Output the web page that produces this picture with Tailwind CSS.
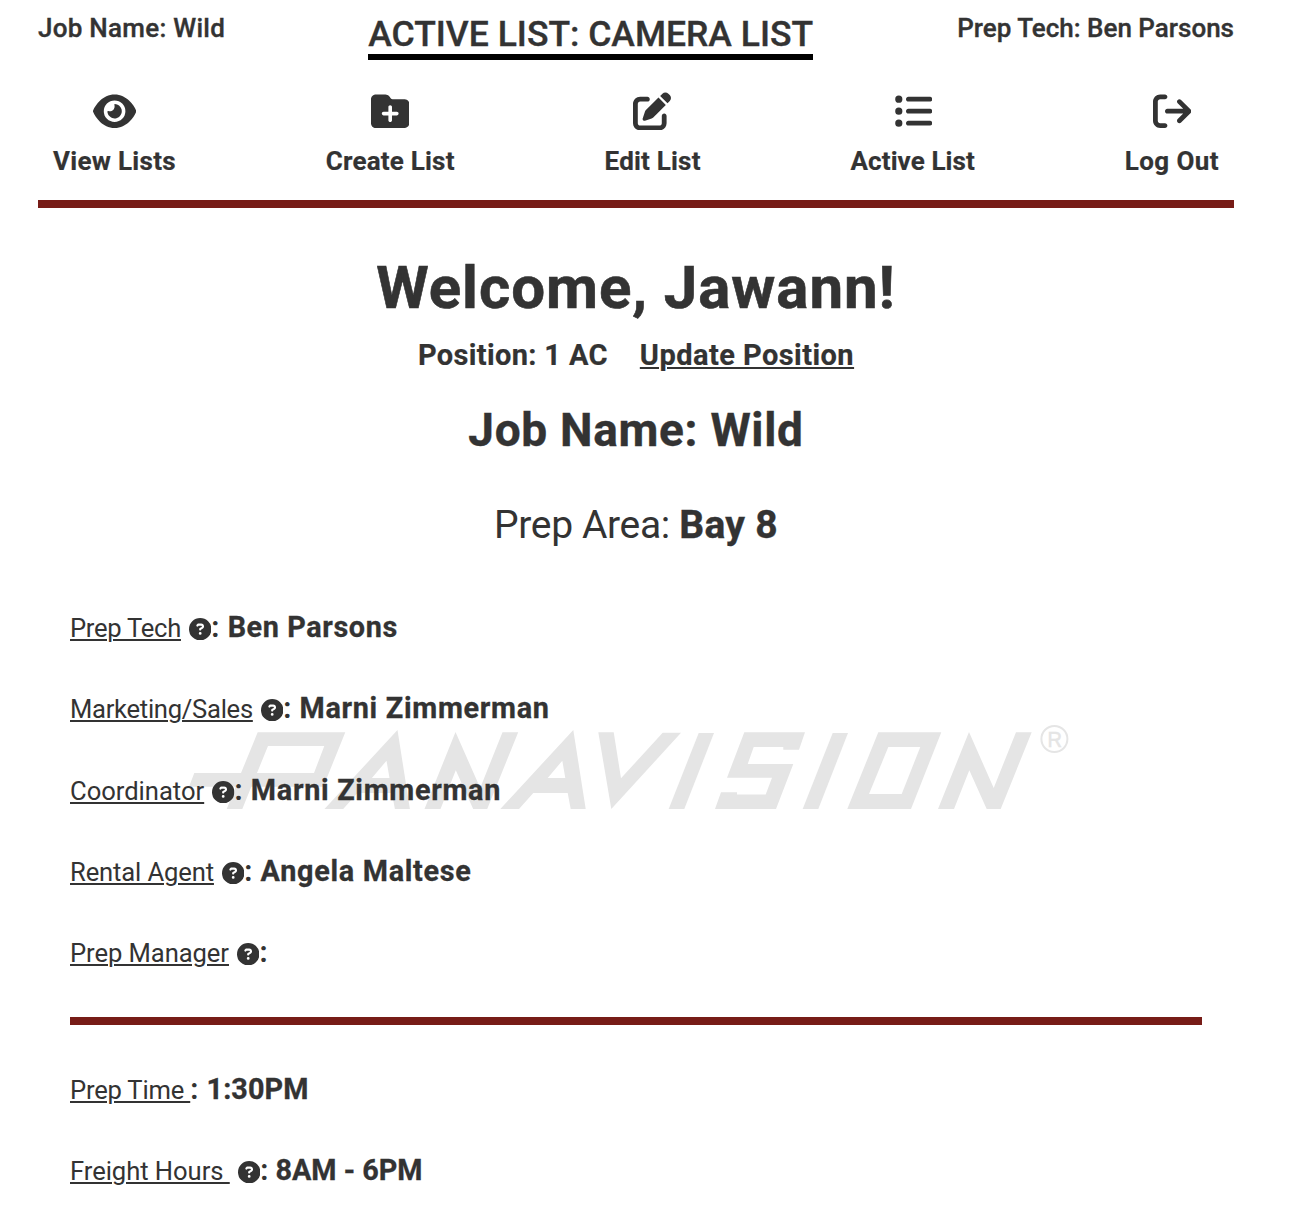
<!DOCTYPE html>
<html lang="en">
<head>
<meta charset="utf-8">
<title>Camera List</title>
<script src="https://cdn.jsdelivr.net/npm/@tailwindcss/browser@4"></script>
</head>
<body class="relative h-[1216px] overflow-hidden bg-white font-[Roboto,sans-serif] text-[#333]">
<!-- shared help icon -->
<svg class="hidden">
  <symbol id="help" viewBox="0 0 512 512"><path d="M256 512A256 256 0 1 0 256 0a256 256 0 1 0 0 512zM169.8 165.3c7.9-22.3 29.1-37.3 52.8-37.3h58.3c34.9 0 63.1 28.3 63.1 63.1c0 22.6-12.1 43.5-31.7 54.8L280 264.4c-.2 13-10.9 23.6-24 23.6c-13.3 0-24-10.7-24-24V250.5c0-8.6 4.6-16.5 12.1-20.8l44.3-25.4c4.7-2.7 7.6-7.7 7.6-13.1c0-8.4-6.8-15.1-15.1-15.1H222.6c-3.4 0-6.4 2.1-7.5 5.3l-.4 1.2c-4.4 12.5-18.2 19-30.6 14.6s-19-18.2-14.6-30.6l.4-1.2zM224 352a32 32 0 1 1 64 0 32 32 0 1 1 -64 0z"/></symbol>
</svg>

<!-- watermark logo -->
<svg class="absolute top-[720px] left-[180px] h-[100px] w-[900px] text-[#e5e5e5]" viewBox="180 720 900 100" fill="currentColor" fill-rule="evenodd">
  <path d="M257.7 732.3H345.3L323.3 786.7H251.3L242.3 809H226.7L235.7 786.7H189L194.3 773H241ZM268 746L257 773H314L324.3 746Z"/>
  <path id="a" d="M573.3 730L585.7 809H570.7L567.7 793H533.3L519 809H500.3ZM562.3 760.7L547.7 778H565.3Z"/>
  <use href="#a" x="-175.8"/>
  <path id="n" d="M938 809L969 732L993.7 788L1016 732.2H1031.7L1000.7 809H986.7L969.3 770.3L954 809Z"/>
  <use href="#n" x="-513.5"/>
  <path d="M598.3 732.2H613.7L621 778.3L662.7 732.8H681L611.3 809Z"/>
  <path id="i" d="M698.7 733H714L684.3 809H668.7Z"/>
  <use href="#i" x="134"/>
  <path d="M744.3 732.2H805L799 749.7H783.3V747H753.7L747.7 764H793.3L776 809H715L721 792.3H737V794.5H765.7L772 777.7H727Z"/>
  <path d="M878.3 732.2H941.3L911 809H847.3ZM888.3 747L869 794H901.7L920.3 747Z"/>
  <circle cx="1054.4" cy="739" r="13" fill="none" stroke="currentColor" stroke-width="2"/>
  <text x="1047.4" y="746.8" font-family="Liberation Sans" font-size="22" textLength="14.5" lengthAdjust="spacingAndGlyphs" stroke="currentColor" stroke-width="0.5">R</text>
</svg>

<main class="relative mx-[38px] mr-[64px]">
  <header class="flex items-start justify-between pt-[13px] font-medium [-webkit-text-stroke:0.35px]">
    <div class="text-[26px] leading-[30px] tracking-[0.26px]">Job Name: Wild</div>
    <h1 class="mr-px h-[47px] border-b-[6px] border-black text-[35.5px] leading-[42px] font-medium whitespace-nowrap">ACTIVE LIST: CAMERA LIST</h1>
    <div class="text-[26px] leading-[30px]">Prep Tech: Ben Parsons</div>
  </header>

  <nav class="flex h-[148px] justify-between border-b-8 border-[#771c17] px-[15px] pt-8 text-[26px] leading-[30px] font-bold tracking-[0.2px] [-webkit-text-stroke:0.2px]">
    <a class="flex flex-col items-center gap-[15.6px]"><svg class="h-[38.4px] w-[43.2px]" viewBox="0 0 576 512" fill="currentColor"><path d="M288 32c-80.8 0-145.5 36.8-192.6 80.6C48.6 156 17.3 208 2.5 243.7c-3.3 7.9-3.3 16.7 0 24.6C17.3 304 48.6 356 95.4 399.4C142.5 443.2 207.2 480 288 480s145.5-36.8 192.6-80.6c46.8-43.5 78.1-95.4 93-131.1c3.3-7.9 3.3-16.7 0-24.6c-14.9-35.7-46.2-87.7-93-131.1C433.5 68.8 368.8 32 288 32zM144 256a144 144 0 1 1 288 0 144 144 0 1 1 -288 0zm144-64c0 35.3-28.7 64-64 64c-7.1 0-13.9-1.2-20.3-3.3c-5.5-1.8-11.9 1.6-11.7 7.4c.3 6.9 1.3 13.8 3.2 20.7c13.7 51.2 66.4 81.6 117.6 67.9s81.6-66.4 67.9-117.6c-11.1-41.5-47.8-69.4-88.6-71.1c-5.8-.2-9.2 6.1-7.4 11.7c2.1 6.4 3.3 13.2 3.3 20.3z"/></svg><span class="tracking-[0.3px]">View Lists</span></a>
    <a class="flex flex-col items-center gap-[15.6px]"><svg class="size-[38.4px]" viewBox="0 0 512 512" fill="currentColor"><path d="M512 416c0 35.3-28.7 64-64 64L64 480c-35.3 0-64-28.7-64-64L0 96C0 60.7 28.7 32 64 32l128 0c20.1 0 39.1 9.5 51.2 25.6l19.2 25.6c6 8.1 15.5 12.8 25.6 12.8l160 0c35.3 0 64 28.7 64 64l0 256zM232 376c0 13.3 10.7 24 24 24s24-10.7 24-24l0-64 64 0c13.3 0 24-10.7 24-24s-10.7-24-24-24l-64 0 0-64c0-13.3-10.7-24-24-24s-24 10.7-24 24l0 64-64 0c-13.3 0-24 10.7-24 24s10.7 24 24 24l64 0 0 64z"/></svg><span>Create List</span></a>
    <a class="flex flex-col items-center gap-[15.6px]"><svg class="size-[38.4px]" viewBox="0 0 512 512" fill="currentColor"><path d="M471.6 21.7c-21.9-21.9-57.3-21.9-79.2 0L362.3 51.7l97.9 97.9 30.1-30.1c21.9-21.9 21.9-57.3 0-79.2L471.6 21.7zm-299.2 220c-6.1 6.1-10.8 13.6-13.5 21.9l-29.6 88.8c-2.9 8.6-.6 18.1 5.8 24.6s15.9 8.7 24.6 5.8l88.8-29.6c8.2-2.7 15.7-7.4 21.9-13.5L437.7 172.3 339.7 74.3 172.4 241.7zM96 64C43 64 0 107 0 160L0 416c0 53 43 96 96 96l256 0c53 0 96-43 96-96l0-96c0-17.7-14.3-32-32-32s-32 14.3-32 32l0 96c0 17.7-14.3 32-32 32L96 448c-17.7 0-32-14.3-32-32l0-256c0-17.7 14.3-32 32-32l96 0c17.7 0 32-14.3 32-32s-14.3-32-32-32L96 64z"/></svg><span>Edit List</span></a>
    <a class="flex flex-col items-center gap-[15.6px]"><svg class="size-[38.4px]" viewBox="0 0 512 512" fill="currentColor"><path d="M64 144a48 48 0 1 0 0-96 48 48 0 1 0 0 96zM192 64c-17.7 0-32 14.3-32 32s14.3 32 32 32l288 0c17.7 0 32-14.3 32-32s-14.3-32-32-32L192 64zm0 160c-17.7 0-32 14.3-32 32s14.3 32 32 32l288 0c17.7 0 32-14.3 32-32s-14.3-32-32-32l-288 0zm0 160c-17.7 0-32 14.3-32 32s14.3 32 32 32l288 0c17.7 0 32-14.3 32-32s-14.3-32-32-32l-288 0zM64 464a48 48 0 1 0 0-96 48 48 0 1 0 0 96zm48-208a48 48 0 1 0 -96 0 48 48 0 1 0 96 0z"/></svg><span class="tracking-[0.1px]">Active List</span></a>
    <a class="flex flex-col items-center gap-[15.6px]"><svg class="size-[38.4px]" viewBox="0 0 512 512" fill="currentColor"><path d="M502.6 278.6c12.5-12.5 12.5-32.8 0-45.3l-128-128c-12.5-12.5-32.8-12.5-45.3 0s-12.5 32.8 0 45.3L402.7 224 192 224c-17.7 0-32 14.3-32 32s14.3 32 32 32l210.7 0-73.4 73.4c-12.5 12.5-12.5 32.8 0 45.3s32.8 12.5 45.3 0l128-128zM160 96c17.7 0 32-14.3 32-32s-14.3-32-32-32L96 32C43 32 0 75 0 128L0 384c0 53 43 96 96 96l64 0c17.7 0 32-14.3 32-32s-14.3-32-32-32l-64 0c-17.7 0-32-14.3-32-32l0-256c0-17.7 14.3-32 32-32l64 0z"/></svg><span class="tracking-[0.4px]">Log Out</span></a>
  </nav>

  <section class="flex flex-col items-center whitespace-nowrap">
    <h2 class="mt-[45px] text-[60px] leading-[70px] font-bold tracking-[0.95px] [-webkit-text-stroke:0.6px]">Welcome, Jawann!</h2>
    <div class="mt-[15px] flex gap-8 text-[29px] leading-[34px] font-bold [-webkit-text-stroke:0.2px]">
      <span class="tracking-[0.35px]">Position: 1 AC</span>
      <a class="tracking-[0.45px] underline decoration-2 underline-offset-2">Update Position</a>
    </div>
    <h3 class="mt-[31px] text-[46px] leading-[54px] font-bold tracking-[0.7px] [-webkit-text-stroke:0.4px]">Job Name: Wild</h3>
    <div class="mt-[45px] text-[39px] leading-[46px] tracking-[-0.35px]">Prep Area: <b class="tracking-[0.3px] [-webkit-text-stroke:0.4px]">Bay 8</b></div>
  </section>

  <section class="mx-8 mt-[62px] text-[28.8px] leading-[34px] font-bold">
    <div class="mb-[47px] flex h-[34px] items-baseline whitespace-pre"><span class="text-[25.6px] font-normal tracking-[-0.28px] underline decoration-2 underline-offset-2">Prep Tech</span><svg class="relative top-[3px] ml-2 size-[22.4px]" fill="currentColor"><use href="#help"/></svg>: <span class="ml-px tracking-[0.6px] [-webkit-text-stroke:0.3px]">Ben Parsons</span></div>
    <div class="mb-[48px] flex h-[34px] items-baseline whitespace-pre"><span class="text-[25.6px] font-normal tracking-[-0.28px] underline decoration-2 underline-offset-2">Marketing/Sales</span><svg class="relative top-[3px] ml-2 size-[22.4px]" fill="currentColor"><use href="#help"/></svg>: <span class="ml-px tracking-[0.7px] [-webkit-text-stroke:0.3px]">Marni Zimmerman</span></div>
    <div class="mb-[47px] flex h-[34px] items-baseline whitespace-pre"><span class="text-[25.6px] font-normal tracking-[-0.02px] underline decoration-2 underline-offset-2">Coordinator</span><svg class="relative top-[3px] ml-2 size-[22.4px]" fill="currentColor"><use href="#help"/></svg>: <span class="ml-px tracking-[0.7px] [-webkit-text-stroke:0.3px]">Marni Zimmerman</span></div>
    <div class="mb-[47px] flex h-[34px] items-baseline whitespace-pre"><span class="text-[25.6px] font-normal tracking-[-0.13px] underline decoration-2 underline-offset-2">Rental Agent</span><svg class="relative top-[3px] ml-2 size-[22.4px]" fill="currentColor"><use href="#help"/></svg>: <span class="ml-px tracking-[0.7px] [-webkit-text-stroke:0.3px]">Angela Maltese</span></div>
    <div class="mb-[48px] flex h-[34px] items-baseline whitespace-pre"><span class="text-[25.6px] font-normal tracking-[-0.07px] underline decoration-2 underline-offset-2">Prep Manager</span><svg class="relative top-[3px] ml-2 size-[22.4px]" fill="currentColor"><use href="#help"/></svg>:</div>
    <hr class="mb-[47px] h-2 border-0 bg-[#771c17]">
    <div class="mb-[47px] flex h-[34px] items-baseline whitespace-pre"><span class="text-[25.6px] font-normal tracking-[-0.2px] underline decoration-2 underline-offset-2">Prep Time </span>: <span class="ml-px tracking-[0.1px] [-webkit-text-stroke:0.3px]">1:30PM</span></div>
    <div class="flex h-[34px] items-baseline whitespace-pre"><span class="text-[25.6px] font-normal tracking-[-0.05px] underline decoration-2 underline-offset-2">Freight Hours </span><svg class="relative top-[3px] ml-2 size-[22.4px]" fill="currentColor"><use href="#help"/></svg>: <span class="[-webkit-text-stroke:0.3px]">8AM - 6PM</span></div>
  </section>
</main>
</body>
</html>
